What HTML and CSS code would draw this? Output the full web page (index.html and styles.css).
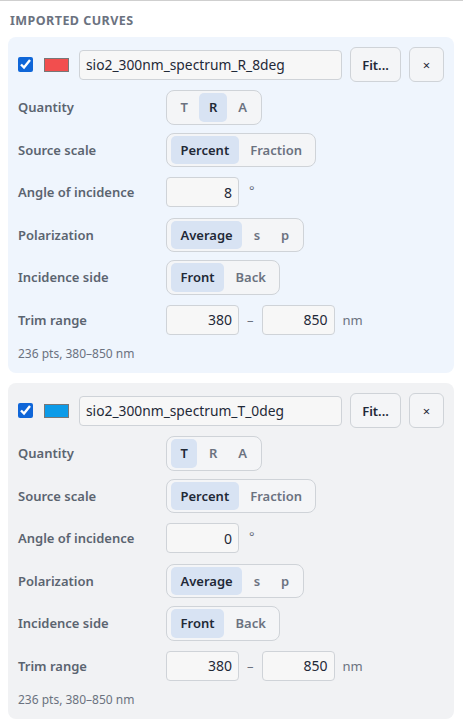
FILE: index.html
```html
<!DOCTYPE html>
<html lang="en">
<head>
    <meta charset="UTF-8">
    <meta name="viewport" content="width=device-width, initial-scale=1.0">
    <title>Imported curves</title>
    <link rel="stylesheet" href="styles.css">
</head>
<body>
    <div class="panel">
        <div class="panel-title">Imported curves</div>

        <div class="curve-card active">
            <div class="curve-head">
                <input type="checkbox" class="curve-toggle" checked>
                <span class="swatch" style="background-color: #f24e4e;"></span>
                <input type="text" class="text-input name-input" value="sio2_300nm_spectrum_R_8deg">
                <button class="btn fit-btn">Fit...</button>
                <button class="btn close-btn">&times;</button>
            </div>
            <div class="field">
                <span class="field-label">Quantity</span>
                <div class="segmented">
                    <button class="seg">T</button>
                    <button class="seg selected">R</button>
                    <button class="seg">A</button>
                </div>
            </div>
            <div class="field">
                <span class="field-label">Source scale</span>
                <div class="segmented">
                    <button class="seg selected">Percent</button>
                    <button class="seg">Fraction</button>
                </div>
            </div>
            <div class="field">
                <span class="field-label">Angle of incidence</span>
                <div class="field-control">
                    <input type="text" class="text-input num-input" value="8">
                    <span class="unit degree">&deg;</span>
                </div>
            </div>
            <div class="field">
                <span class="field-label">Polarization</span>
                <div class="segmented">
                    <button class="seg selected">Average</button>
                    <button class="seg">s</button>
                    <button class="seg">p</button>
                </div>
            </div>
            <div class="field">
                <span class="field-label">Incidence side</span>
                <div class="segmented">
                    <button class="seg selected">Front</button>
                    <button class="seg">Back</button>
                </div>
            </div>
            <div class="field">
                <span class="field-label">Trim range</span>
                <div class="field-control">
                    <input type="text" class="text-input num-input" value="380">
                    <span class="unit">&ndash;</span>
                    <input type="text" class="text-input num-input" value="850">
                    <span class="unit">nm</span>
                </div>
            </div>
            <div class="curve-info">236 pts, 380&ndash;850 nm</div>
        </div>

        <div class="curve-card">
            <div class="curve-head">
                <input type="checkbox" class="curve-toggle" checked>
                <span class="swatch" style="background-color: #0c9be8;"></span>
                <input type="text" class="text-input name-input" value="sio2_300nm_spectrum_T_0deg">
                <button class="btn fit-btn">Fit...</button>
                <button class="btn close-btn">&times;</button>
            </div>
            <div class="field">
                <span class="field-label">Quantity</span>
                <div class="segmented">
                    <button class="seg selected">T</button>
                    <button class="seg">R</button>
                    <button class="seg">A</button>
                </div>
            </div>
            <div class="field">
                <span class="field-label">Source scale</span>
                <div class="segmented">
                    <button class="seg selected">Percent</button>
                    <button class="seg">Fraction</button>
                </div>
            </div>
            <div class="field">
                <span class="field-label">Angle of incidence</span>
                <div class="field-control">
                    <input type="text" class="text-input num-input" value="0">
                    <span class="unit degree">&deg;</span>
                </div>
            </div>
            <div class="field">
                <span class="field-label">Polarization</span>
                <div class="segmented">
                    <button class="seg selected">Average</button>
                    <button class="seg">s</button>
                    <button class="seg">p</button>
                </div>
            </div>
            <div class="field">
                <span class="field-label">Incidence side</span>
                <div class="segmented">
                    <button class="seg selected">Front</button>
                    <button class="seg">Back</button>
                </div>
            </div>
            <div class="field">
                <span class="field-label">Trim range</span>
                <div class="field-control">
                    <input type="text" class="text-input num-input" value="380">
                    <span class="unit">&ndash;</span>
                    <input type="text" class="text-input num-input" value="850">
                    <span class="unit">nm</span>
                </div>
            </div>
            <div class="curve-info">236 pts, 380&ndash;850 nm</div>
        </div>
    </div>
</body>
</html>
```

FILE: styles.css
```css
body, html {
    margin: 0;
    padding: 0;
}

body {
    font-family: "Noto Sans", "Liberation Sans", sans-serif;
    background-color: #fff;
    color: #1f2937;
}

.panel {
    border-top: 1px solid #cfcfcf;
    padding: 0 9px 0 8px;
}

.panel-title {
    padding: 12px 0 0 2px;
    margin-bottom: 8px;
    font-size: 12.5px;
    line-height: 16px;
    font-weight: bold;
    letter-spacing: 0.45px;
    text-transform: uppercase;
    color: #6b7280;
}

.curve-card {
    background-color: #f1f2f4;
    border-radius: 8px;
    padding: 10px;
    margin-bottom: 10px;
    display: flex;
    flex-direction: column;
    gap: 8px;
}

.curve-card.active {
    background-color: #eff5fd;
}

.curve-head {
    display: flex;
    align-items: center;
    gap: 8px;
}

.curve-toggle {
    width: 15px;
    height: 15px;
    margin: 0 3px 0 0;
    accent-color: #0f66d8;
}

.swatch {
    width: 23px;
    height: 12px;
    border: 1px solid #777;
    margin-right: 2px;
}

.text-input {
    height: 30px;
    box-sizing: border-box;
    border: 1px solid #cfd3d8;
    border-radius: 4px;
    background-color: #f7f7f7;
    font-family: inherit;
    font-size: 13.8px;
    color: #1f2937;
    padding: 0 6px;
    outline: none;
}

.name-input {
    flex: 1;
    min-width: 0;
}

.num-input {
    width: 73px;
    text-align: right;
    font-size: 14px;
}

.btn {
    height: 35px;
    box-sizing: border-box;
    border: 1px solid #cfd3d8;
    border-radius: 6px;
    background-color: #f4f5f7;
    font-family: inherit;
    font-size: 13px;
    font-weight: 600;
    color: #1f2937;
    cursor: pointer;
    padding: 0;
}

.fit-btn {
    width: 51px;
}

.close-btn {
    width: 35px;
    font-weight: normal;
    font-size: 13px;
}

.field {
    display: grid;
    grid-template-columns: 148px auto;
    align-items: center;
    min-height: 34.5px;
}

.field-label {
    font-size: 13px;
    font-weight: 600;
    color: #5b6470;
}

.field-control {
    display: flex;
    align-items: center;
    gap: 8px;
}

.unit {
    font-size: 13px;
    color: #6b7280;
}

.degree {
    margin-left: 2px;
    margin-top: -4px;
}

.segmented {
    display: inline-flex;
    justify-self: start;
    gap: 2px;
    padding: 2px 4px;
    border: 1px solid #cfd3d8;
    border-radius: 8px;
    background-color: #f4f5f7;
}

.seg {
    height: 28.5px;
    padding: 0 9.5px;
    border: none;
    border-radius: 5px;
    background: transparent;
    font-family: inherit;
    font-size: 13px;
    font-weight: 600;
    color: #6b7280;
    cursor: pointer;
}

.seg.selected {
    background-color: #d8e3f3;
    color: #1f2937;
}

.curve-info {
    font-size: 12px;
    line-height: 18px;
    color: #6b7280;
}
```
